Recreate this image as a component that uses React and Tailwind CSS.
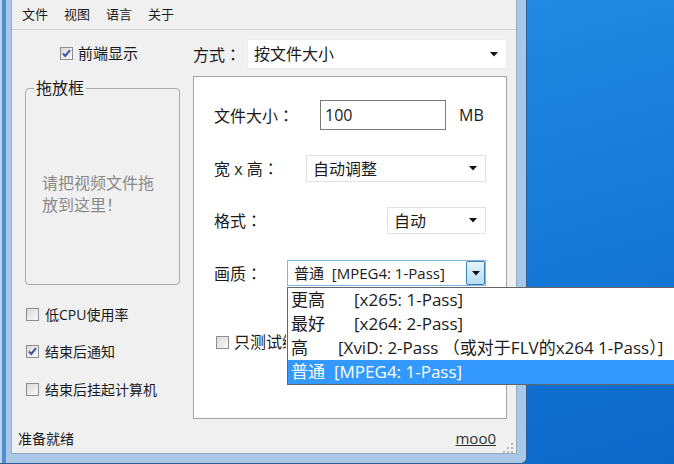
import React from 'react';

const Arrow = () => (
  <svg width="8" height="5" viewBox="0 0 8 5" className="shrink-0">
    <path d="M0 0H8L4 4.5Z" fill="#111" />
  </svg>
);

// full-width colon centred like the Windows UI font
const Colon = () => <span className="font-['Noto_Sans_CJK_TC',sans-serif]">：</span>;

const CheckBox = ({ checked }) => (
  <span className="w-[13px] h-[13px] shrink-0 border border-[#8e8f8f] bg-linear-to-br from-[#d9d9d9] to-[#fafafa] flex items-center justify-center">
    {checked && (
      <svg width="11" height="11" viewBox="0 0 11 11">
        <path d="M2 5.5L4.3 8L9 2.2" fill="none" stroke="#3a55a5" strokeWidth="2" />
      </svg>
    )}
  </span>
);

const Combo = ({ children, className }) => (
  <div className={`flex items-center justify-between bg-white border border-[#e2e2e2] pl-[6px] pr-[8px] ${className}`}>
    <span className="whitespace-pre">{children}</span>
    <Arrow />
  </div>
);

const Row = ({ checked, label }) => (
  <div className="flex items-center gap-[6px] h-[20px] text-[14px]">
    <CheckBox checked={checked} />
    <span>{label}</span>
  </div>
);

const menu = ['文件', '视图', '语言', '关于'];

const quality = [
  { name: '更高', gap: 'ml-[29px]', spec: '[x265: 1-Pass]' },
  { name: '最好', gap: 'ml-[29px]', spec: '[x264: 2-Pass]' },
  { name: '高', gap: 'ml-[30px]', spec: '[XviD: 2-Pass （或对于FLV的x264 1-Pass）]' },
  { name: '普通', gap: 'ml-[9px]', spec: '[MPEG4: 1-Pass]', active: true },
];

export default function App() {
  return (
    <div className="w-[674px] h-[464px] relative overflow-hidden flex bg-[linear-gradient(165deg,#2892e6_0%,#1a80dc_45%,#0c67c9_100%)] font-['Open_Sans','Noto_Sans_CJK_SC',sans-serif] text-[#1b1b1b]">
      {/* window */}
      <div className="w-[527px] h-full flex flex-col pl-[11px] pr-[9px] pb-[9px] bg-[#a9c8e8] border-r border-b border-[#2f5f96] rounded-br-[6px] shadow-[inset_2px_0_0_#b9d3ec,inset_6px_0_0_#4f8ed1]">
        <div className="flex-1 flex flex-col bg-[#f0f0f0] border border-t-0 border-[#97a9bd]">
          {/* menu */}
          <div className="h-[30px] flex items-center pl-[2px] border-b border-[#d2d2d2] text-[13px]">
            {menu.map((m) => (
              <span key={m} className="px-[8px]">{m}</span>
            ))}
          </div>

          <div className="flex-1 flex">
            {/* left column */}
            <div className="w-[181px] flex flex-col">
              <div className="mt-[10px] h-[26px] pl-[48px] flex items-center gap-[5px] text-[15px]">
                <CheckBox checked />
                <span>前端显示</span>
              </div>
              <fieldset className="mt-[12px] ml-[13px] w-[155px] h-[207px] border border-[#ababab] rounded-[4px] px-[16px]">
                <legend className="ml-[-8px] px-[2px] text-[16px] leading-[20px]">拖放框</legend>
                <p className="mt-[74px] text-[16px] leading-[22px] text-[#8a8a8a]">
                  请把视频文件拖<br />放到这里！
                </p>
              </fieldset>
              <div className="pl-[14px] flex flex-col">
                <div className="mt-[19px]"><Row label="低CPU使用率" /></div>
                <div className="mt-[17px]"><Row checked label="结束后通知" /></div>
                <div className="mt-[18px]"><Row label="结束后挂起计算机" /></div>
              </div>
            </div>

            {/* right column */}
            <div className="w-[314px] flex flex-col">
              <div className="mt-[9px] h-[30px] flex items-center text-[16px]">
                <span className="w-[54px]">方式<Colon /></span>
                <Combo className="flex-1 h-[30px] border-[#ececec] pr-[6px]">按文件大小</Combo>
              </div>
              <div className="mt-[7px] h-[343px] bg-white border border-[#a3a3a3] flex flex-col pl-[20px] pr-[20px] text-[16px]">
                <div className="mt-[23px] h-[30px] flex items-center">
                  <span className="w-[106px]">文件大小<Colon /></span>
                  <div className="w-[126px] h-[30px] border border-[#7a7a7a] flex items-center pl-[4px]">100</div>
                  <span className="ml-[13px]">MB</span>
                </div>
                <div className="mt-[25px] h-[27px] flex items-center">
                  <span>宽 x 高<Colon /></span>
                  <Combo className="ml-auto w-[180px] h-[27px]">自动调整</Combo>
                </div>
                <div className="mt-[25px] h-[27px] flex items-center">
                  <span>格式<Colon /></span>
                  <Combo className="ml-auto w-[99px] h-[27px]">自动</Combo>
                </div>
                <div className="mt-[26px] h-[26px] flex items-center">
                  <span>画质<Colon /></span>
                  <div className="ml-auto w-[199px] h-[26px] flex items-center bg-white border border-[#7eb4ea] pl-[6px] text-[15px]">
                    <span className="flex-1 whitespace-pre">普通  [MPEG4: 1-Pass]</span>
                    <div className="w-[19px] h-full flex items-center justify-center border border-[#3c7fb1] rounded-[2px] bg-linear-to-b from-[#e5f4fc] to-[#b6dcf3]">
                      <Arrow />
                    </div>
                  </div>
                </div>
                <div className="mt-[46px] ml-[2px] flex items-center gap-[5px] h-[20px]">
                  <CheckBox />
                  {/* the open list covers the rest of this label */}
                  <span className="w-[52px] overflow-hidden whitespace-nowrap">只测试编码</span>
                </div>
              </div>
            </div>
          </div>

          {/* status bar */}
          <div className="h-[29px] flex items-center justify-between pl-[6px] pr-[2px] text-[14px]">
            <span>准备就绪</span>
            <div className="flex items-end gap-[6px]">
              <span className="underline text-[15px] text-[#333]">moo0</span>
              <svg width="12" height="12" viewBox="0 0 12 12" className="mb-[-4px]">
                {[[9, 1], [9, 5], [5, 5], [9, 9], [5, 9], [1, 9]].map(([x, y]) => (
                  <rect key={`${x}-${y}`} x={x} y={y} width="2" height="2" fill="#b8b8b8" />
                ))}
              </svg>
            </div>
          </div>
        </div>
      </div>

      {/* open dropdown list */}
      <div className="absolute left-[287px] top-[287px] w-[420px] h-[98px] bg-white border border-[#646464] text-[17px]">
        {quality.map((q) => (
          <div
            key={q.name}
            className={`h-[24px] flex items-center pl-[3px] whitespace-pre ${q.active ? 'bg-[#3399ff] text-white' : ''}`}
          >
            <span>{q.name}</span>
            <span className={q.gap}>{q.spec}</span>
          </div>
        ))}
      </div>
    </div>
  );
}
